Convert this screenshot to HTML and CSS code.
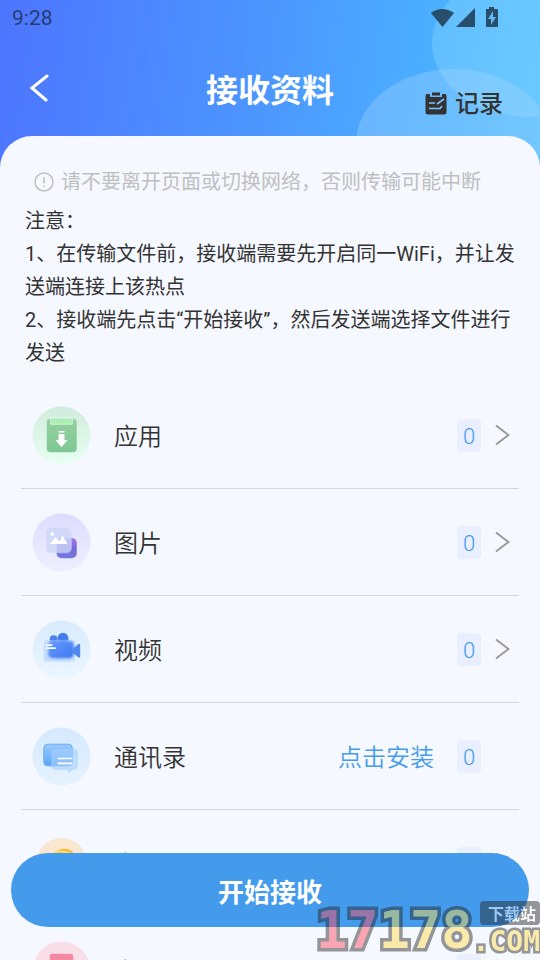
FILE: index.html
```html
<!DOCTYPE html>
<html lang="zh-CN">
<head>
<meta charset="utf-8">
<meta name="viewport" content="width=device-width, initial-scale=1">
<title>接收资料</title>
<link rel="stylesheet" href="styles.css">
</head>
<body>
<div class="app">
  <header class="header">
    <svg class="header-art" width="186" height="172" viewBox="0 0 186 172" aria-hidden="true">
      <ellipse cx="176" cy="43" rx="98" ry="74" fill="#96e1ff" fill-opacity=".32"/>
      <ellipse cx="100" cy="143" rx="98" ry="74" fill="#b4dcff" fill-opacity=".3"/>
    </svg>
    <div class="status">
      <span>9:28</span>
      <svg width="70" height="22" viewBox="0 0 70 22" fill="#274f6b" aria-hidden="true">
        <path d="M0 6Q11-2 23 6L11.500 20Z"/>
        <path d="M44 1V20H25Z"/>
        <path d="M55 2H58V0H63V2H66Q67 2 67 3V19Q67 20 66 20H56Q55 20 55 19Z"/>
        <path fill="#65baf5" d="M62 4L57 12H60V18L65 10H62Z"/>
      </svg>
    </div>
    <div class="nav">
      <button class="back" type="button" aria-label="返回">
        <svg width="20" height="28" viewBox="0 0 20 28" fill="none" stroke="#fff" stroke-width="3"><path d="M18 2L3 14L17 26" stroke-linecap="round"/></svg>
      </button>
      <h1 class="title">接收资料</h1>
      <a class="record" href="#records">
        <svg width="22" height="23" viewBox="0 0 22 23" aria-hidden="true">
          <path fill="#333" d="M2 2H5V5H17V2H20Q21.500 2 21.500 4V20Q21.500 22.500 19 22.500H3Q.5 22.500 .5 20V4Q.5 2 2 2ZM7 .5H15V3.500H7Z"/>
          <path fill="none" stroke="#7cc4ff" stroke-width="1.600" d="M4 11H10M4 16.500H15L17 14M12 12L19 7"/>
        </svg>
        <span>记录</span>
      </a>
    </div>
  </header>
  <main class="panel">
    <p class="tip">
      <svg width="20" height="20" viewBox="0 0 20 20" fill="none" stroke="#bfbfbf" stroke-width="1.500" aria-hidden="true"><circle cx="10" cy="10" r="9"/><path d="M10 5V11.500M10 13.500V15"/></svg>
      <span>请不要离开页面或切换网络，否则传输可能中断</span>
    </p>
    <div class="notes">
      <p>注意：</p>
      <p>1、在传输文件前，接收端需要先开启同一WiFi，并让发送端连接上该热点</p>
      <p>2、接收端先点击“开始接收”，然后发送端选择文件进行发送</p>
    </div>
    <ul class="list">
      <li class="row">
        <svg class="icon" viewBox="0 0 60 60" aria-hidden="true">
          <defs>
            <linearGradient id="ga" x2="0" y2="1"><stop stop-color="#d0ecdc"/><stop offset="1" stop-color="#e8fff3"/></linearGradient>
            <linearGradient id="gb" x2="0" y2="1"><stop stop-color="#94d09f"/><stop offset="1" stop-color="#7fc893"/></linearGradient>
          </defs>
          <circle cx="30" cy="30" r="29.500" fill="url(#ga)"/>
          <path fill="url(#gb)" d="M17 13.500H43Q45.500 13.500 45.500 17V43Q45.500 47 41.500 47H19Q15 47 15 43V17Q15 13.500 17 13.500Z"/>
          <path fill="#aaf0b3" d="M19 13.500H41V18.500H19Z"/><path fill="none" stroke="#d2f4d9" stroke-width="1" d="M19 13V18.500H41V13"/>
          <path fill="#fff" d="M27 25.500H33V27H27ZM27 28.500H33V34.500H36L30 42L24 34.500H27Z"/>
        </svg>
        <span class="label">应用</span><span class="count">0</span>
        <a class="go" href="#apps" aria-label="应用"><svg width="16" height="22" viewBox="0 0 16 22"><path d="M2 1.500L14.500 11L2 20.500"/></svg></a>
      </li>
      <li class="row">
        <svg class="icon" viewBox="0 0 60 60" aria-hidden="true">
          <defs>
            <linearGradient id="pa" x2="0" y2="1"><stop stop-color="#dedcff"/><stop offset="1" stop-color="#eeefff"/></linearGradient>
            <linearGradient id="pb" x2="0" y2="1"><stop stop-color="#a47be8"/><stop offset=".5" stop-color="#7768d6"/><stop offset="1" stop-color="#7478df"/></linearGradient>
          </defs>
          <circle cx="30" cy="30" r="29.500" fill="url(#pa)"/>
          <rect x="25" y="25.500" width="20.500" height="20.500" rx="5" fill="url(#pb)"/>
          <rect x="14.500" y="15" width="25.500" height="25.500" rx="5" fill="#cdd6f6" fill-opacity=".82"/>
          <path d="M25.500 40.500H35Q40 40.500 40 35V26" fill="none" stroke="#b3b6f4"/>
          <circle cx="20.500" cy="21.500" r="1.800" fill="#fff"/><path fill="#fff" d="M18 31.500L24 24.500L28 29L31 23L36 31.500Z"/>
        </svg>
        <span class="label">图片</span><span class="count">0</span>
        <a class="go" href="#pictures" aria-label="图片"><svg width="16" height="22" viewBox="0 0 16 22"><path d="M2 1.500L14.500 11L2 20.500"/></svg></a>
      </li>
      <li class="row">
        <svg class="icon" viewBox="0 0 60 60" aria-hidden="true">
          <defs>
            <linearGradient id="va" x2="0" y2="1"><stop stop-color="#d9ebff"/><stop offset="1" stop-color="#ebf6ff"/></linearGradient>
            <linearGradient id="vb" x2="1" y2="1"><stop stop-color="#659bff"/><stop offset="1" stop-color="#3f76ee"/></linearGradient>
            <filter id="vs" x="-20%" y="-20%" width="140%" height="140%"><feGaussianBlur stdDeviation="1"/></filter>
          </defs>
          <circle cx="30" cy="30" r="29.500" fill="url(#va)"/>
          <circle cx="22" cy="19.500" r="4" fill="#4c80f0"/><circle cx="31.500" cy="18.500" r="5.500" fill="#477bee"/>
          <rect x="12" y="20.500" width="32" height="22" rx="3" fill="#b7d6ff" fill-opacity=".7"/>
          <rect x="16.500" y="21" width="26" height="18" rx="5" fill="url(#vb)" filter="url(#vs)"/>
          <path fill="#5189f3" d="M41 30L47 24.500Q49 23.500 49 26V37Q49 39 47 38L41 33Z"/>
          <path stroke="#fff" stroke-width="1.800" stroke-linecap="round" d="M15 25.500H20M15 28.500H23.500"/>
        </svg>
        <span class="label">视频</span><span class="count">0</span>
        <a class="go" href="#videos" aria-label="视频"><svg width="16" height="22" viewBox="0 0 16 22"><path d="M2 1.500L14.500 11L2 20.500"/></svg></a>
      </li>
      <li class="row">
        <svg class="icon" viewBox="0 0 60 60" aria-hidden="true">
          <defs>
            <linearGradient id="ca" x2="0" y2="1"><stop stop-color="#d6e9ff"/><stop offset="1" stop-color="#e5f2ff"/></linearGradient>
            <linearGradient id="cb" x2="0" y2="1"><stop stop-color="#9acbff"/><stop offset="1" stop-color="#5ca5f5"/></linearGradient>
          </defs>
          <circle cx="30" cy="30" r="29.500" fill="url(#ca)"/>
          <rect x="12" y="17.500" width="29" height="22" rx="4" fill="url(#cb)" stroke="#65aaf5"/>
          <path fill="#a8d1fd" fill-opacity=".62" stroke="#9bcafc" stroke-opacity=".5" d="M24 22.500H42Q46 22.500 46 26V39Q46 43 42 43H41L38.500 46L35 43H24Q20 43 20 39V26Q20 22.500 24 22.500Z"/>
          <path stroke="#fff" stroke-width="1.600" d="M26 32H41M26 37H41"/>
        </svg>
        <span class="label">通讯录</span><a class="install" href="#install">点击安装</a><span class="count">0</span><span class="go"></span>
      </li>
      <li class="row">
        <svg class="icon" viewBox="0 0 60 60" aria-hidden="true">
          <circle cx="30" cy="30" r="26" fill="#fbe6d0"/>
          <path fill="#f9b528" d="M22 19Q34 11 42 19Q46 28 38 35L22 29Z"/><path fill="none" stroke="#ffdc74" stroke-width="2" d="M22 19Q31 16 39 20"/>
        </svg>
        <span class="label">音乐</span><span class="count">0</span>
        <a class="go" href="#music" aria-label="音乐"><svg width="16" height="22" viewBox="0 0 16 22"><path d="M2 1.500L14.500 11L2 20.500"/></svg></a>
      </li>
      <li class="row">
        <svg class="icon" viewBox="0 0 60 60" aria-hidden="true">
          <circle cx="30" cy="30" r="29.500" fill="#f9dfe8"/><rect x="18" y="13" width="24" height="32" rx="3" fill="#f589a3"/>
        </svg>
        <span class="label">文件</span><span class="count">0</span>
        <a class="go" href="#files" aria-label="文件"><svg width="16" height="22" viewBox="0 0 16 22"><path d="M2 1.500L14.500 11L2 20.500"/></svg></a>
      </li>
    </ul>
  </main>
  <button class="start" type="button">开始接收</button>
  <div class="mark">
    <span class="digits"><span class="red">17</span>178</span>
    <span class="side"><span class="bubble">下载站</span><span class="com">.COM</span></span>
  </div>
</div>
</body>
</html>
```
FILE: styles.css
```css
* { box-sizing: border-box; }

body {
  margin: 0;
  background: #f5f8ff;
  color: #333;
  font-family: Roboto, "Noto Sans CJK SC", sans-serif;
}

h1, p, ul { margin: 0; padding: 0; }
a { color: inherit; text-decoration: none; }
button { border: 0; padding: 0; background: none; font: inherit; cursor: pointer; }
svg { display: block; flex: none; }

.app {
  position: relative;
  height: 100vh;
  overflow: hidden;
}

.header {
  position: relative;
  height: 172px;
  background: linear-gradient(98deg, #4d75ff 0%, #4c91ff 42%, #4bafff 78%, #57c0ff 100%);
}

.header-art { position: absolute; top: 0; right: 0; }

.status {
  position: relative;
  display: flex;
  align-items: center;
  justify-content: space-between;
  height: 36px;
  padding: 0 39px 0 12px;
  color: #253d70;
  font-size: 21px;
}

.nav {
  position: relative;
  display: grid;
  grid-template-columns: 1fr auto 1fr;
  align-items: center;
  height: 108px;
  padding: 0 37px 0 29px;
}

.back { justify-self: start; height: 40px; margin-bottom: 4px; }

.title {
  padding-top: 2px;
  color: #fff;
  font-size: 32px;
  line-height: 48px;
  font-weight: 700;
  margin-left: -8px;
  margin-right: -16px;
}

.record {
  justify-self: end;
  display: flex;
  align-items: center;
  gap: 8px;
  margin-top: 26px;
  font-size: 24px;
  line-height: 36px;
  font-weight: 500;
}

.record span { padding-top: 2px; }

.panel {
  position: relative;
  margin-top: -36px;
  padding: 30px 21px 0;
  border-radius: 32px 32px 0 0;
  background: #f5f8ff;
}

.tip {
  display: flex;
  align-items: center;
  gap: 7px;
  padding-left: 13px;
  color: #bfbfbf;
  font-size: 20px;
  line-height: 32px;
}

.notes {
  padding: 7px 4px 12px;
  font-size: 20px;
  line-height: 33px;
}

.list { list-style: none; }

.row {
  display: flex;
  align-items: center;
  height: 107px;
  padding: 0 9px 0 11px;
  border-bottom: 1px solid #d5d7dd;
}

.icon { width: 59px; height: 59px; }

.label {
  flex: 1;
  margin-left: 23px;
}

.install {
  margin-right: 23px;
  color: #449bec;
}

.label, .install {
  padding-top: 4px;
  font-size: 24px;
  line-height: 36px;
  font-weight: 350;
}

.count {
  width: 24px;
  height: 33px;
  padding-top: 1px;
  border-radius: 4px;
  background: #e9efff;
  color: #449bec;
  font-size: 22px;
  line-height: 33px;
  font-weight: 300;
  text-align: center;
}

.go { width: 16px; margin-left: 13px; }
.go path { fill: none; stroke: #999; stroke-width: 2; }

.start {
  position: absolute;
  right: 11px;
  bottom: 33px;
  left: 11px;
  height: 74px;
  border-radius: 37px;
  background: #449bec;
  color: #fff;
  font-size: 26px;
  font-weight: 700;
}

.mark {
  position: absolute;
  right: 0;
  bottom: 0;
  display: flex;
  align-items: center;
  height: 60px;
  color: #ffdb48;
  font-family: "DejaVu Sans Mono", monospace;
  font-weight: 700;
  opacity: .46;
  pointer-events: none;
}

.digits {
  font-size: 52px;
  line-height: 60px;
  -webkit-text-stroke: 7px #222;
  paint-order: stroke fill;
}

.red { color: #ff465c; }

.side { display: flex; flex-direction: column; align-items: flex-end; }

.bubble {
  padding: 0 4px 0 8px;
  border-radius: 4px;
  background: #222;
  color: #fff;
  font-family: "Noto Sans CJK SC", sans-serif;
  font-size: 16px;
  line-height: 24px;
}

.com {
  font-size: 28px;
  line-height: 34px;
  -webkit-text-stroke: 5px #222;
  paint-order: stroke fill;
}
```
